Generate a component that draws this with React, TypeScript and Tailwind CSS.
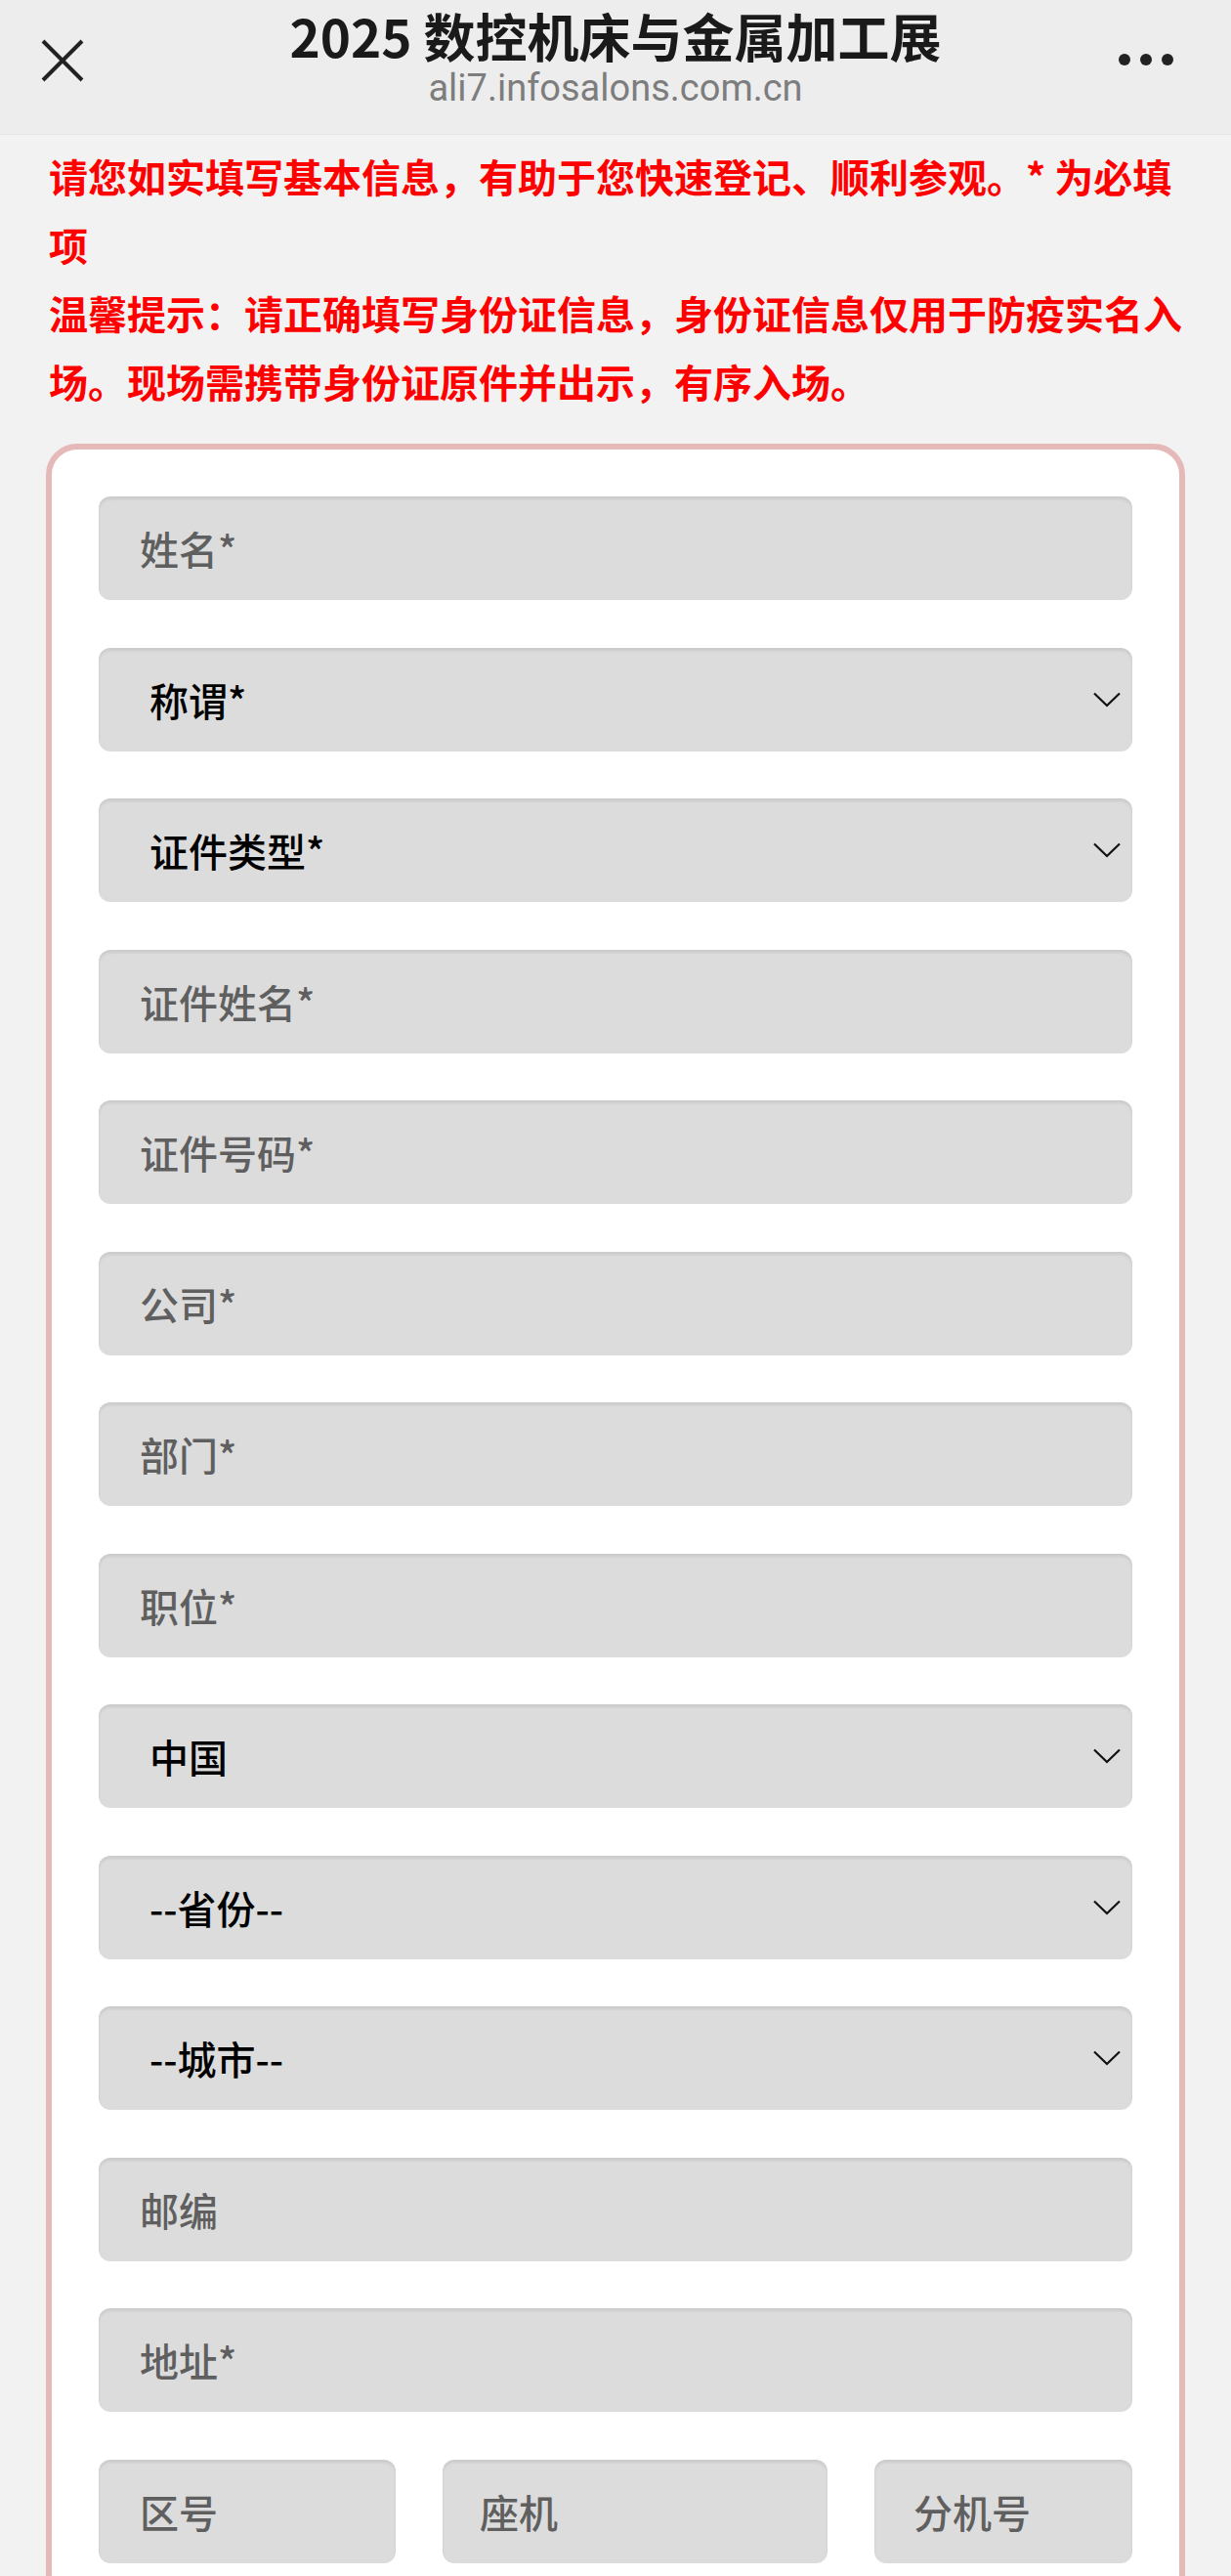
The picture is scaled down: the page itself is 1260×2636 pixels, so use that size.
const cjk = "font-['Noto_Sans_CJK_SC','Noto_Sans',sans-serif]";

function TextField({ label, className = '' }: { label: string; className?: string }) {
  return (
    <input
      readOnly
      placeholder={label}
      className={`h-[106px] rounded-[12px] bg-[#dcdcdc] pl-[42px] text-[40px] font-medium text-black outline-none placeholder:text-[#5f5f5f] shadow-[inset_0_3px_3px_rgba(0,0,0,0.08)] ${cjk} ${className}`}
    />
  );
}

function SelectField({ label }: { label: string }) {
  return (
    <div className={`flex h-[106px] items-center justify-between rounded-[12px] bg-[#dcdcdc] pl-[52px] pr-[12px] text-[40px] font-medium text-black shadow-[inset_0_3px_3px_rgba(0,0,0,0.08)] ${cjk}`}>
      <span>{label}</span>
      <svg width="28" height="16" viewBox="0 0 28 16" fill="none">
        <polyline points="1,1.5 14,14 27,1.5" stroke="#111" strokeWidth="2.2" />
      </svg>
    </div>
  );
}

export default function App() {
  return (
    <div className="min-h-[2636px] bg-[#f2f2f2]">
      {/* top bar */}
      <header className="flex h-[138px] border-b border-[#e4e4e4] bg-[#ededed]">
        <div className="w-[200px] pl-[42px] pt-[40px]">
          <svg width="44" height="44" viewBox="0 0 44 44" fill="none">
            <path d="M2 2 L42 42 M42 2 L2 42" stroke="#222" strokeWidth="4" />
          </svg>
        </div>
        <div className="flex flex-1 flex-col items-center pt-[7px]">
          <h1 className={`text-[53px] font-bold leading-[58px] text-[#1a1a1a] ${cjk}`}>2025 数控机床与金属加工展</h1>
          <p className="mt-[4px] font-['Roboto','Liberation_Sans',sans-serif] text-[38px] leading-[42px] text-[#7d7d7d]">ali7.infosalons.com.cn</p>
        </div>
        <div className="flex w-[200px] justify-end gap-[10px] pr-[59px] pt-[55px]">
          <span className="h-[12px] w-[12px] rounded-full bg-[#222]" />
          <span className="h-[12px] w-[12px] rounded-full bg-[#222]" />
          <span className="h-[12px] w-[12px] rounded-full bg-[#222]" />
        </div>
      </header>

      <div className={`mt-[7px] pl-[50px] pr-[46px] text-[40px] font-bold leading-[70px] text-[#ff0000] ${cjk}`}>
        <p>请您如实填写基本信息，有助于您快速登记、顺利参观。* 为必填项</p>
        <p>温馨提示：请正确填写身份证信息，身份证信息仅用于防疫实名入场。现场需携带身份证原件并出示，有序入场。</p>
      </div>

      <div className="mx-[47px] mt-[29px] rounded-[32px] border-[6px] border-[#e6b9b9] bg-white px-[48px] pt-[48px] pb-[60px]">
        <form className="flex flex-col gap-[48.5px]">
          <TextField label="姓名*" />
          <SelectField label="称谓*" />
          <SelectField label="证件类型*" />
          <TextField label="证件姓名*" />
          <TextField label="证件号码*" />
          <TextField label="公司*" />
          <TextField label="部门*" />
          <TextField label="职位*" />
          <SelectField label="中国" />
          <SelectField label="--省份--" />
          <SelectField label="--城市--" />
          <TextField label="邮编" />
          <TextField label="地址*" />
          <div className="flex gap-[48px]">
            <TextField label="区号" className="w-[304px] min-w-0" />
            <TextField label="座机" className="w-[394px] min-w-0 !pl-[38px]" />
            <TextField label="分机号" className="w-0 min-w-0 flex-1 !pl-[40px]" />
          </div>
        </form>
      </div>
    </div>
  );
}
